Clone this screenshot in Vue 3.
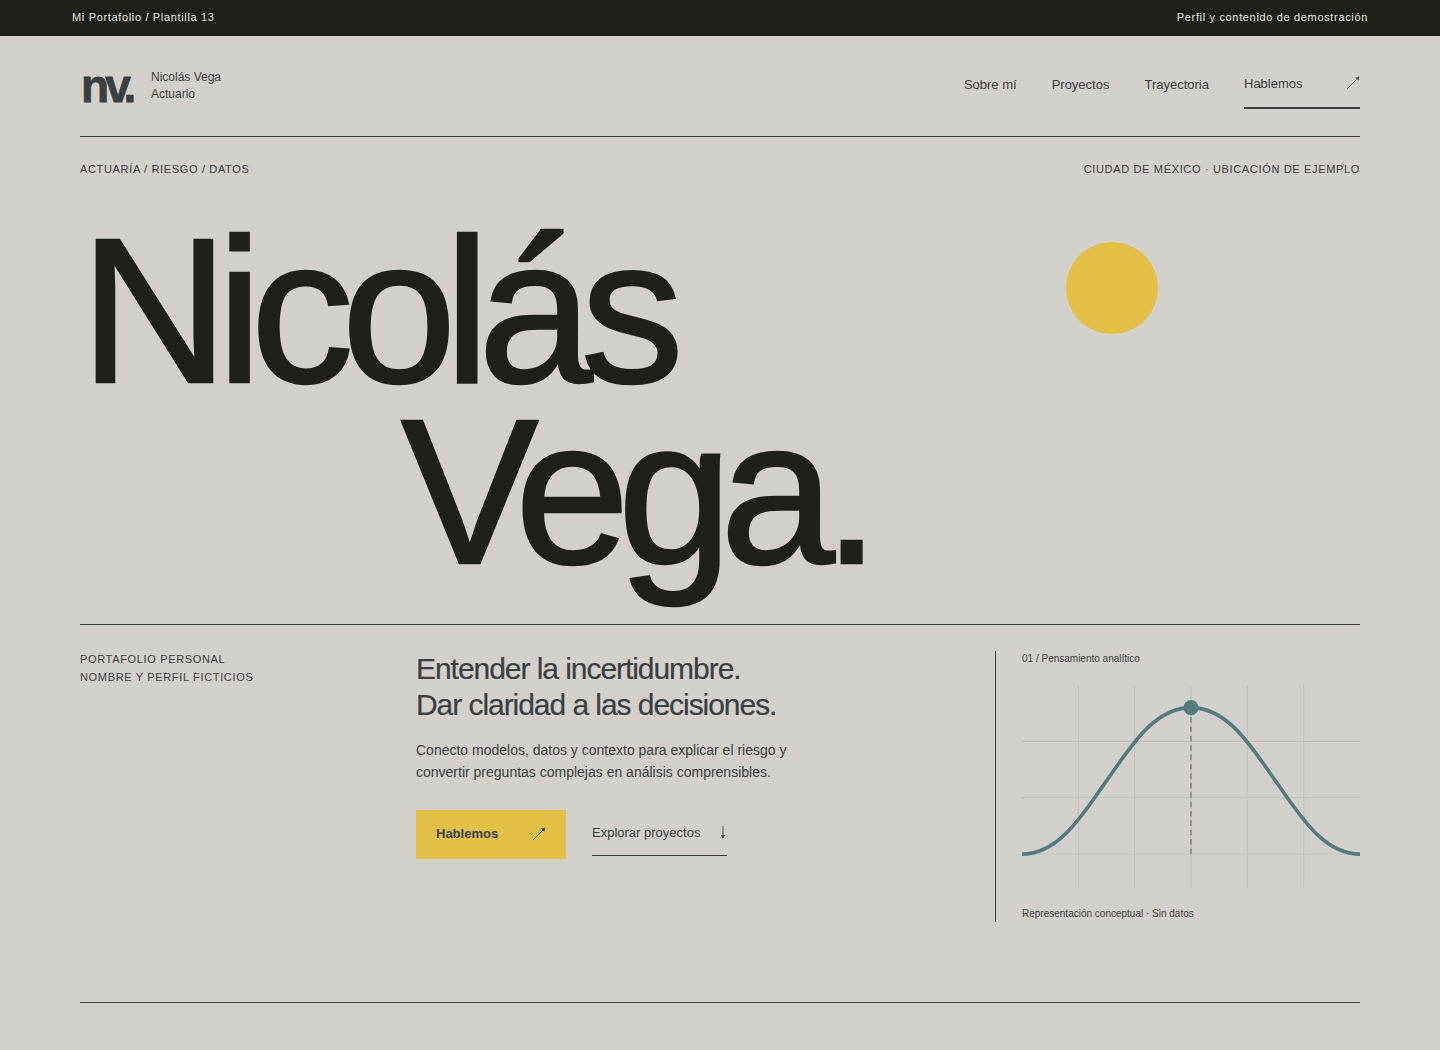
<template>
  <div class="page">
    <div class="topbar">
      <span>Mi Portafolio / Plantilla 13</span>
      <span>Perfil y contenido de demostración</span>
    </div>

    <div class="wrap">
      <header class="header">
        <div class="brand">
          <span class="logo">nv.</span>
          <div class="brand__text">
            <p>Nicolás Vega</p>
            <p>Actuario</p>
          </div>
        </div>
        <nav class="nav">
          <a v-for="link in links" :key="link">{{ link }}</a>
          <a class="nav__active">
            <span>Hablemos</span>
            <svg width="14" height="14" viewBox="0 0 14 14" fill="currentColor" stroke="currentColor" stroke-width="0.7">
              <path d="M1 13 12 2" />
              <path stroke="none" d="M13.4.6 9.2 1.7 12.3 4.8Z" />
            </svg>
          </a>
        </nav>
      </header>

      <div class="meta">
        <span>ACTUARÍA / RIESGO / DATOS</span>
        <span>CIUDAD DE MÉXICO · UBICACIÓN DE EJEMPLO</span>
      </div>

      <section class="hero">
        <h1>
          <span>Nicolás</span>
          <span class="hero__second">Vega.</span>
        </h1>
        <div class="hero__sun"></div>
      </section>

      <section class="lower">
        <div class="lower__note">
          <p>PORTAFOLIO PERSONAL</p>
          <p>NOMBRE Y PERFIL FICTICIOS</p>
        </div>

        <div class="lower__main">
          <h2>Entender la incertidumbre.<br />Dar claridad a las decisiones.</h2>
          <p class="lead">
            Conecto modelos, datos y contexto para explicar el riesgo y<br />convertir preguntas complejas en análisis comprensibles.
          </p>
          <div class="actions">
            <a class="btn">
              <span>Hablemos</span>
              <svg width="14" height="14" viewBox="0 0 14 14" fill="currentColor" stroke="currentColor" stroke-width="0.8">
                <path d="M1 13 12 2" />
                <path stroke="none" d="M13.4.6 9.2 1.7 12.3 4.8Z" />
              </svg>
            </a>
            <a class="explore">
              <span>Explorar proyectos</span>
              <svg width="8" height="13" viewBox="0 0 8 13" fill="currentColor" stroke="currentColor" stroke-width="0.9">
                <path d="M4 0V10" />
                <path stroke="none" d="M4 12.6 1.6 9H6.4Z" />
              </svg>
            </a>
          </div>
        </div>

        <aside class="figure">
          <p>01 / Pensamiento analítico</p>
          <svg class="chart" viewBox="0 0 360 216" fill="none">
            <g stroke="#bcbfbb" stroke-width="1">
              <path v-for="x in [60, 120, 180, 240, 300]" :key="x" :d="`M${x} 0V216`" />
              <path v-for="y in [60, 120, 180]" :key="y" :d="`M0 ${y}H360`" />
            </g>
            <path d="M180 24V180" stroke="#557a80" stroke-width="1.3" stroke-dasharray="6 4" />
            <path d="M0 180C40 180 65 137 90 102C115 67 140 24 180 24C220 24 245 67 270 102C295 137 320 180 360 180" stroke="#557a80" stroke-width="3.8" />
            <circle cx="180" cy="24" r="8" fill="#557a80" />
          </svg>
          <p>Representación conceptual · Sin datos</p>
        </aside>
      </section>
    </div>
  </div>
</template>

<script setup>
const links = ["Sobre mí", "Proyectos", "Trayectoria"];
</script>

<style>
body {
  background: #d3d0cb;
}
</style>

<style scoped>
.page {
  min-height: 1050px;
  background: #d3d0cb;
  color: #3a3f42;
  font-family: "Liberation Sans", Arial, sans-serif;
}
p {
  margin: 0;
}
.topbar {
  display: flex;
  justify-content: space-between;
  align-items: center;
  height: 36px;
  padding: 0 72px 2px;
  box-sizing: border-box;
  background: #1f201a;
  color: #e8e5e0;
  font-size: 11px;
  letter-spacing: 0.06em;
}
.wrap {
  padding: 0 80px;
}
.header {
  display: flex;
  justify-content: space-between;
  height: 100px;
  border-bottom: 1px solid #3a3f42;
  box-sizing: content-box;
}
.brand {
  display: flex;
  align-items: center;
  gap: 16px;
  height: 100px;
}
.logo {
  width: 55px;
  padding-left: 1px;
  box-sizing: border-box;
  font-size: 46px;
  font-weight: 700;
  line-height: 1;
  letter-spacing: -0.085em;
  -webkit-text-stroke: 0.8px #3a3f42;
}
.brand__text {
  font-size: 12px;
  line-height: 17px;
  padding-bottom: 1px;
}
.nav {
  display: flex;
  align-items: flex-start;
  gap: 35px;
  padding-top: 41px;
  font-size: 13px;
  line-height: 16px;
}
.nav__active {
  display: flex;
  justify-content: space-between;
  width: 116px;
  height: 31px;
  margin-top: -1px;
  border-bottom: 2px solid #3a3f42;
}
.nav__active svg {
  opacity: 0.8;
}
.meta {
  display: flex;
  justify-content: space-between;
  padding-top: 26px;
  font-size: 11px;
  line-height: 13px;
  letter-spacing: 0.06em;
}
.hero {
  position: relative;
  height: 448px;
  border-bottom: 1px solid #3a3f42;
  box-sizing: content-box;
}
h1 {
  margin: 0;
  padding-top: 45px;
  color: #1f201a;
  font-size: 206px;
  font-weight: 400;
  line-height: 181px;
  letter-spacing: -0.058em;
  -webkit-text-stroke: 2.5px #1f201a;
}
h1 span {
  display: block;
}
.hero__second {
  padding-left: 321px;
}
.hero__sun {
  position: absolute;
  top: 66px;
  left: 986px;
  width: 92px;
  height: 92px;
  border-radius: 50%;
  background: #e2bf45;
}
.lower {
  display: grid;
  grid-template-columns: 336px 579px 365px;
  height: 378px;
  padding-top: 26px;
  box-sizing: border-box;
  border-bottom: 1px solid #3a3f42;
}
.lower__note {
  margin-top: -1px;
  font-size: 11px;
  line-height: 18px;
  letter-spacing: 0.06em;
}
h2 {
  margin: 0;
  font-size: 30px;
  font-weight: 400;
  line-height: 36px;
  letter-spacing: -0.035em;
  -webkit-text-stroke: 0.2px #3a3f42;
}
.lead {
  margin-top: 16px;
  font-size: 14px;
  line-height: 22px;
}
.actions {
  display: flex;
  align-items: flex-start;
  gap: 26px;
  margin-top: 27px;
}
.btn {
  display: flex;
  justify-content: space-between;
  align-items: center;
  width: 150px;
  height: 49px;
  padding: 0 20px 2px;
  box-sizing: border-box;
  background: #e2bf45;
  font-size: 13px;
  font-weight: 700;
}
.explore {
  display: flex;
  justify-content: space-between;
  align-items: center;
  width: 135px;
  height: 45px;
  border-bottom: 1px solid #3a3f42;
  font-size: 13px;
}
.figure {
  height: 271px;
  padding-left: 26px;
  border-left: 1px solid #3a3f42;
  font-size: 10px;
  line-height: 14px;
}
.figure p:first-child {
  padding-top: 1px;
}
.chart {
  display: block;
  width: 338px;
  height: 203px;
  margin: 19px 0 19px;
}
</style>
